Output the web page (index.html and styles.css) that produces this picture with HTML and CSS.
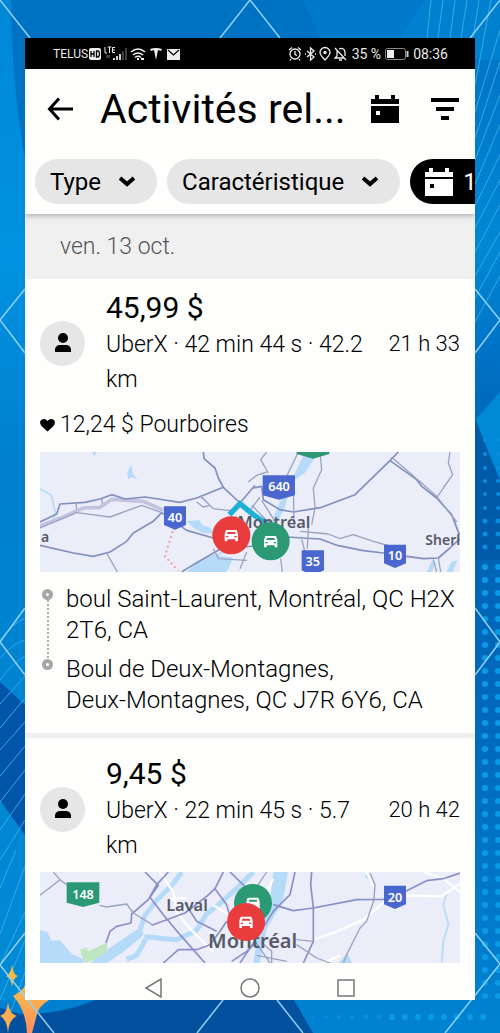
FILE: index.html
```html
<!DOCTYPE html>
<html lang="fr">
<head>
  <meta charset="UTF-8">
  <meta name="viewport" content="width=device-width, initial-scale=1.0">
  <title>Activités relatives aux revenus</title>
  <link rel="stylesheet" href="styles.css">
</head>
<body>
  <svg class="backdrop" viewBox="0 0 500 1033" preserveAspectRatio="none" aria-hidden="true">
    <defs>
      <linearGradient id="leftBlue" x1="0" y1="0" x2="0" y2="1">
        <stop offset="0" stop-color="#0087d8"/>
        <stop offset="0.25" stop-color="#0092e0"/>
        <stop offset="0.45" stop-color="#0080cf"/>
        <stop offset="1" stop-color="#008bd6"/>
      </linearGradient>
      <linearGradient id="rightBlue" x1="0" y1="0" x2="0" y2="1">
        <stop offset="0" stop-color="#0070c4"/>
        <stop offset="0.24" stop-color="#0088d4"/>
        <stop offset="0.34" stop-color="#0072c6"/>
        <stop offset="0.45" stop-color="#0062b2"/>
        <stop offset="0.7" stop-color="#0069bb"/>
        <stop offset="1" stop-color="#0083d2"/>
      </linearGradient>
      <linearGradient id="starFill" x1="0" y1="0" x2="0" y2="1">
        <stop offset="0" stop-color="#f9bd4d"/>
        <stop offset="1" stop-color="#ff8f5c"/>
      </linearGradient>
      <pattern id="dots" x="478" y="1" width="13" height="13" patternUnits="userSpaceOnUse">
        <circle cx="7" cy="7" r="3" fill="#0a9ae6"/>
      </pattern>
      <pattern id="dotsBottom" x="385" y="1010" width="13" height="13" patternUnits="userSpaceOnUse">
        <circle cx="7" cy="7" r="3" fill="#0a9ae6"/>
      </pattern>
    </defs>
    <rect width="250" height="1033" fill="url(#leftBlue)"/>
    <rect x="250" width="250" height="1033" fill="url(#rightBlue)"/>
    <path d="M11 0H500V38H26V165Q12 90 11 0Z" fill="#0072c4"/>
    <path d="M303 0H500V38H320Z" fill="#0079ca"/>
    <path d="M400 38L425 0H500V60H470Z" fill="#0081cf"/>
    <path d="M475 420L500 392V480Z" fill="#0089d6"/>
    <path d="M475 418L500 482V560H475Z" fill="#005aa8"/>
    <path d="M0 682L25 705V835L0 800Z" fill="#0055a8"/>
    <path d="M0 1000H294L313 1033H0Z" fill="#03509f"/>
    <path d="M0 1000H95Q60 1015 20 1014L0 1008Z" fill="#0080cf"/>
    <g class="thin">
      <path d="M431 0L427 38M443 0L438 38M455 0L450 38M467 0L461 38M479 0L473 38M491 0L475 85M500 30L475 112M500 62L475 138M500 95L475 160M500 125L475 184M500 155L475 206M500 180L475 228M500 205L475 252M500 232L475 276M500 252L475 298M500 276L475 322"/>
      <path d="M0 640Q12 624 25 618M0 658Q12 644 25 640M0 680Q12 664 25 656M0 704L25 676M0 728L25 698M0 750L25 722M0 776L25 746M0 802L25 770M0 830L25 794M0 860L25 820M0 888L16 850M0 934L25 866M0 965L25 912M0 1000L25 940M8 1020L25 972"/>
    </g>
    <rect x="478" y="560" width="22" height="440" fill="url(#dots)"/>
    <rect x="385" y="1010" width="104" height="13" fill="url(#dotsBottom)"/>
    <g fill="#0a8edd">
      <circle cx="485" cy="440" r="2"/><circle cx="498" cy="440" r="2"/>
      <circle cx="485" cy="454" r="2"/><circle cx="498" cy="454" r="2"/>
      <circle cx="485" cy="468" r="2"/><circle cx="498" cy="468" r="2"/>
      <circle cx="485" cy="481" r="2"/><circle cx="498" cy="481" r="2"/>
      <circle cx="485" cy="494" r="2"/><circle cx="498" cy="494" r="2"/>
      <circle cx="485" cy="508" r="2"/><circle cx="498" cy="508" r="2"/>
      <circle cx="485" cy="521" r="2.5"/><circle cx="498" cy="521" r="2.5"/>
      <circle cx="485" cy="534" r="2.5"/><circle cx="498" cy="534" r="2.5"/>
      <circle cx="485" cy="547" r="2.5"/><circle cx="498" cy="547" r="2.5"/>
      <circle cx="313" cy="1017" r="1"/><circle cx="326" cy="1017" r="1.5"/>
      <circle cx="339" cy="1017" r="2"/><circle cx="352" cy="1017" r="2"/>
      <circle cx="366" cy="1017" r="2.5"/><circle cx="379" cy="1017" r="2.5"/>
    </g>
    <path d="M13 996Q24 990 25 985H40V1000H49Q38 1006 36 1018L32 1033H27Q26 1010 13 996Z" fill="url(#starFill)"/>
    <path d="M12 964Q13 975 18 976Q13 978 12 987Q11 978 6 976Q11 974 12 964Z" fill="#f9b942"/>
    <path d="M8 1002Q9 1014 17 1016Q9 1019 8 1033Q7 1019 0 1016Q7 1014 8 1002Z" fill="#fdac4e"/>
    <path class="zigzag" d="M0 0L30 38M250 0L220 38M250 0L280 38M500 0L470 38M25 289L0 320L25 353M475 289L500 320L475 353M25 608L0 642L25 675M475 608L500 642L475 675M25 933L0 965L54 1033M475 933L500 964L445 1033M277 1000L303 1033M223 1000L197 1033"/>
  </svg>

  <div class="phone">
    <div class="status-bar">
      <div class="status-left">
        <span class="carrier">TELUS</span>
        <svg width="78" height="16" viewBox="0 0 78 16" aria-hidden="true">
          <rect x="1" y="2" width="12" height="12" rx="2" fill="#eee"/>
          <path d="M3 5v6M6 5v6M3 8h3M8.500 5v6h1q2 0 2-3t-2-3z" fill="none" stroke="#000" stroke-width="1.300"/>
          <path d="M17 1v6h2M19.500 1h4M21.500 1v6M27 1.500h-2.500v5H27M24.500 4H27" fill="none" stroke="#eee"/>
          <path d="M26 14v-2M29 14v-4M32 14V8" stroke="#eee" stroke-width="1.800"/>
          <path d="M35 14V5M38 14V2M19 9v3M21 9v3" stroke="#555" stroke-width="1.500"/>
          <path d="M43 6q7-6 14 0M45 9q5-4 10 0M47 11.500q3-2.500 6 0" fill="none" stroke="#eee" stroke-width="1.600"/>
          <path d="M49 13h2M53 13h3" stroke="#eee" stroke-width="2"/>
          <path d="M62 3q6-2 12 0l-1 2-3-1-2 10-2-10-3 1z" fill="#eee"/>
        </svg>
        <svg width="14" height="16" viewBox="0 0 14 16" aria-hidden="true">
          <rect y="3" width="13" height="11" fill="#eee"/>
          <path d="M1 4l5.500 5L12 4" fill="none" stroke="#000" stroke-width="1.200"/>
        </svg>
      </div>
      <div class="status-right">
        <svg width="60" height="16" viewBox="0 0 60 16" fill="none" stroke="#eee" stroke-width="1.300" aria-hidden="true">
          <circle cx="7" cy="8" r="5"/>
          <path d="M7 5v3.500l2 1M1 4l3-2.500M13 4l-3-2.500M3 13l-1 1.500M11 13l1 1.500"/>
          <path d="M19 5l7 6-3.500 3V2L26 5l-7 6M17 8h1M27 8h1"/>
          <path d="M37 14Q32 9 32 6.500a5 5 0 0 1 10 0Q42 9 37 14z"/>
          <circle cx="37" cy="6.500" r="1" fill="#eee"/>
          <path d="M47 2l11 12M49 5v5l-2 2h9M51 3q5-2 6 3v4M51 14h3"/>
        </svg>
        <span>35 %</span>
        <svg width="24" height="12" viewBox="0 0 24 12" aria-hidden="true">
          <rect x="0.500" y="0.500" width="20" height="11" rx="2" fill="none" stroke="#888"/>
          <rect x="2" y="2" width="7" height="8" fill="#eee"/>
          <path d="M22.500 3v6" stroke="#ccc" stroke-width="2"/>
        </svg>
        <span>08:36</span>
      </div>
    </div>

    <header class="header">
      <div class="title-row">
        <button class="icon-button" type="button" aria-label="Retour">
          <svg width="26" height="24" viewBox="0 0 26 24" fill="none" stroke="#000" stroke-width="3">
            <path d="M2 12H26M12 1.500L2.500 12L12 22.500"/>
          </svg>
        </button>
        <h1>Activités rel...</h1>
        <button class="icon-button" type="button" aria-label="Calendrier">
          <svg width="28" height="28" viewBox="0 0 28 28">
            <path d="M0 4H4V0H8V4H20V0H24V4H28V9H0ZM0 11H28V28H0ZM5 16V20H9V16Z" fill="#000" fill-rule="evenodd"/>
          </svg>
        </button>
        <button class="icon-button" type="button" aria-label="Filtrer">
          <svg width="28" height="22" viewBox="0 0 28 22" fill="#000">
            <path d="M0 0H28V4H0ZM5 9H23V13H5ZM10 18H18V22H10Z"/>
          </svg>
        </button>
      </div>
      <div class="chips">
        <button class="chip" type="button">Type
          <svg width="16" height="11" viewBox="0 0 16 11"><path d="M1 2L8 8L15 2" fill="none" stroke="#000" stroke-width="4"/></svg>
        </button>
        <button class="chip" type="button">Caractéristique
          <svg width="16" height="11" viewBox="0 0 16 11"><path d="M1 2L8 8L15 2" fill="none" stroke="#000" stroke-width="4"/></svg>
        </button>
        <button class="chip chip-dark" type="button">
          <svg width="28" height="28" viewBox="0 0 28 28">
            <path d="M0 4H4V0H8V4H20V0H24V4H28V9H0ZM0 11H28V28H0ZM5 16V20H9V16Z" fill="#fff" fill-rule="evenodd"/>
          </svg>
          1
        </button>
      </div>
    </header>

    <main class="activity">
      <h2 class="day">ven. 13 oct.</h2>

      <section class="trip">
        <div class="trip-head">
          <span class="avatar">
            <svg width="16" height="20" viewBox="0 0 16 20"><circle cx="8" cy="5" r="5"/><path d="M0 19V16Q1 12 5 12H11Q15 12 16 16V19Z"/></svg>
          </span>
          <div class="trip-info">
            <h3>45,99 $</h3>
            <p>UberX · 42 min 44 s · 42.2<br>km</p>
          </div>
          <time class="trip-time">21 h 33</time>
        </div>
        <p class="tip">
          <svg width="15" height="14" viewBox="0 0 15 14"><path d="M7.500 13.500L1.500 8Q0 6 0 4Q1 1 4 1Q6 1 7.500 3Q9 1 11 1Q14 1 15 4Q15 6 13.500 8Z"/></svg>
          12,24 $ Pourboires
        </p>

        <svg class="map" viewBox="0 0 1260 360" preserveAspectRatio="xMidYMid slice" role="img" aria-label="Carte du trajet">
          <g class="water-fill">
            <path d="M262 60l12-22 4 25 14 20-18-8-10 8zM155 0h16l-8 12zM440 208l38-4 10 16 20 6 20 20-40-4-24-12zM440 360l30-32 50-20 60 10-20 42zM1160 360l16-34 10 8-10 26zM1220 360l14-30 18-6-14 36z"/>
            <path d="M795 0h40L795 62 755 90 735 165 705 225 690 220 720 150 762 70z"/>
          </g>
          <g class="water-line">
            <path d="M0 110L34 130L46 182L40 200M470 345L510 318L570 290"/>
          </g>
          <path d="M0 222L70 195L130 168L180 166L215 142L310 148L370 175" class="border-band"/>
          <g class="road">
            <path d="M0 210L50 186L60 156L135 151L180 141L215 128L255 141L315 135L420 151L470 138L550 106L600 153L645 100"/>
            <path d="M490 0L492 20L525 48L535 78L550 106"/>
            <path d="M0 280L100 303L160 313L210 300L260 268L280 243L340 208L365 182L440 235L520 258"/>
            <path d="M640 108L665 103L670 143L720 173L760 180L845 166L945 128L1050 26L1075 0"/>
            <path d="M1050 26L1130 83L1145 103L1190 138L1235 188L1258 248"/>
            <path d="M740 255L840 261L895 281L970 296L1030 303L1100 313L1150 320L1195 318L1230 288L1260 260"/>
            <path d="M425 360L460 338L540 292L660 280"/>
          </g>
          <g class="road minor">
            <path d="M0 228L110 182L210 195L305 160L365 182M108 154L110 172M185 140L187 155M200 303L232 360"/>
            <path d="M480 132L510 160L490 165L470 150M482 132L520 170L570 176M680 0L662 23L685 63M775 0L740 73M840 0L845 53L820 108L825 168L815 218M760 88L762 228"/>
            <path d="M1055 16L1110 63L1190 133L1250 210M1230 0L1225 33L1238 68L1210 108L1190 138"/>
            <path d="M780 238L865 246L900 260L940 248L1000 268L1060 285M785 262L795 300M805 228L802 290M722 320L727 360M1195 318L1202 360M1180 322L1190 360"/>
            <path d="M625 90L650 70L680 60M635 160L690 215M660 135L630 175M520 290L535 320L620 325M600 350L620 300M665 145L700 200"/>
          </g>
          <path d="M398 238L375 313L415 356" class="trail"/>
          <path d="M568 188L600 155L640 188L680 215" class="route"/>
          <g class="badge-blue">
            <path d="M668 70H765V130L717 143L668 130ZM372 163H438V219L405 233L372 219ZM785 295H852V355L818 370L785 355ZM1032 278H1098V334L1065 348L1032 334Z"/>
          </g>
          <path d="M770 -40H868V6L819 20L770 6Z" class="badge-green"/>
          <g class="badge-text">
            <text x="717" y="117">640</text>
            <text x="405" y="211">40</text>
            <text x="818" y="342">35</text>
            <text x="1065" y="325">10</text>
          </g>
          <g class="place">
            <text x="702" y="228" text-anchor="middle" class="town">Montréal</text>
            <text x="3" y="270">a</text>
            <text x="1156" y="280">Sherl</text>
          </g>
          <circle cx="574" cy="250" r="57" fill="#e93c3c"/>
          <path d="M554 246l4-12h32l4 12v22h-8v-6h-24v6h-8zM558 252v4h7v-4zM583 252v4h7v-4zM563 240l-2 6h26l-2-6z" fill="#fff" fill-rule="evenodd"/>
          <circle cx="692" cy="268" r="57" fill="#2b9974"/>
          <path d="M672 264l4-12h32l4 12v22h-8v-6h-24v6h-8zM676 270v4h7v-4zM701 270v4h7v-4zM681 258l-2 6h26l-2-6z" fill="#fff" fill-rule="evenodd"/>
        </svg>

        <ol class="stops">
          <li>boul Saint-Laurent, Montréal, QC H2X<br>2T6, CA</li>
          <li>Boul de Deux-Montagnes,<br>Deux-Montagnes, QC J7R 6Y6, CA</li>
        </ol>
      </section>

      <section class="trip">
        <div class="trip-head">
          <span class="avatar">
            <svg width="16" height="20" viewBox="0 0 16 20"><circle cx="8" cy="5" r="5"/><path d="M0 19V16Q1 12 5 12H11Q15 12 16 16V19Z"/></svg>
          </span>
          <div class="trip-info">
            <h3>9,45 $</h3>
            <p>UberX · 22 min 45 s · 5.7<br>km</p>
          </div>
          <time class="trip-time">20 h 42</time>
        </div>

        <svg class="map map-cut" viewBox="0 0 1260 273" preserveAspectRatio="xMidYMid slice" role="img" aria-label="Carte du trajet">
          <g class="water-fill">
            <path d="M0 174L22 180L34 206L60 205L95 245L130 262V273H0ZM150 273L200 235L265 190L305 165L310 190L250 240L200 273ZM700 0H744L728 90L680 170L660 273H640L655 180L690 90ZM895 273L922 243L936 273ZM980 0l12 30-16-16z"/>
          </g>
          <g class="water-line wide">
            <path d="M300 175L315 130L350 85L400 35L425 0M260 262L290 250L310 215L320 195L410 203L470 175L500 125L540 95L600 40L640 0"/>
          </g>
          <path d="M1220 65L1210 98L1225 158L1210 208L1205 273" class="water-line"/>
          <path d="M120 233L140 226L145 238L200 212L203 238L165 262L135 273L128 260Z" fill="#bfe6c1"/>
          <g class="road-white">
            <path d="M360 0L400 60L410 120L450 170L520 240M390 80L440 78M520 100L570 130M700 20L660 100M820 203L880 183L970 143L1040 85L1100 70L1205 73L1260 35M980 0L1000 45M900 250L850 273M1150 0L1210 20L1260 60"/>
          </g>
          <g class="road purple">
            <path d="M198 213L210 178L230 163L273 153L275 126L325 83L350 38L385 0M315 0L355 40L330 76L370 128L420 188L495 273"/>
            <path d="M335 160L435 123L500 73L525 50L550 0M525 50L560 98L575 150M435 93L470 148L530 178M370 273L415 233L470 233L510 218L540 178L560 148M570 0L630 58M575 268L620 238L650 210"/>
            <path d="M815 0L812 38L820 108L820 208L790 273M765 0L750 68L700 118L675 158L650 198L600 273"/>
            <path d="M700 98L760 116L820 108L950 83L1030 82L1100 56L1160 26L1210 20L1260 3"/>
          </g>
          <g class="road minor">
            <path d="M0 70L60 23L40 0M60 23L80 38M178 100L200 105L260 96L280 123L340 160M990 3L1005 38L1002 83L980 148L960 168L920 248L910 273"/>
            <path d="M770 203L820 208M770 218L830 258L870 273M640 200L690 273M665 212L695 238V273M680 0L640 60M650 250L740 268"/>
          </g>
          <path d="M80 31H178V92L129 105L80 92Z" class="badge-green"/>
          <path d="M1032 41H1098V97L1065 111L1032 97Z" class="badge-blue"/>
          <g class="badge-text">
            <text x="129" y="80">148</text>
            <text x="1065" y="90">20</text>
          </g>
          <g class="place">
            <text x="441" y="116" text-anchor="middle" class="town">Laval</text>
            <text x="638" y="228" text-anchor="middle" class="city">Montréal</text>
          </g>
          <circle cx="639" cy="93" r="57" fill="#2b9974"/>
          <path d="M619 89l4-12h32l4 12v22h-8v-6h-24v6h-8zM628 83l-2 6h26l-2-6z" fill="#fff" fill-rule="evenodd"/>
          <circle cx="618" cy="150" r="57" fill="#e93c3c"/>
          <path d="M598 146l4-12h32l4 12v22h-8v-6h-24v6h-8zM602 152v4h7v-4zM627 152v4h7v-4zM607 140l-2 6h26l-2-6z" fill="#fff" fill-rule="evenodd"/>
        </svg>
      </section>
    </main>

    <nav class="nav-bar">
      <button type="button" aria-label="Précédent">
        <svg width="20" height="20" viewBox="0 0 20 20"><path d="M2 10L17 1V19Z"/></svg>
      </button>
      <button type="button" aria-label="Accueil">
        <svg width="20" height="20" viewBox="0 0 20 20"><circle cx="10" cy="10" r="9"/></svg>
      </button>
      <button type="button" aria-label="Applications récentes">
        <svg width="20" height="20" viewBox="0 0 20 20"><rect x="2" y="2" width="16" height="16"/></svg>
      </button>
    </nav>
  </div>
</body>
</html>
```

FILE: styles.css
```css
*,
*::before,
*::after {
  box-sizing: border-box;
}

body {
  margin: 0;
  padding: 38px 25px 33px;
  position: relative;
  min-height: 100vh;
  background-color: #0080cf;
  font-family: Roboto, "Liberation Sans", sans-serif;
  font-size: 23px;
  font-weight: 300;
  color: #000;
}

h1, h2, h3, p, ol {
  margin: 0;
  padding: 0;
}

button {
  border: none;
  padding: 0;
  background: none;
  font-family: inherit;
  color: #000;
  cursor: pointer;
}

svg {
  display: block;
  flex: none;
}

.backdrop {
  position: absolute;
  top: 0;
  left: 0;
  width: 100%;
  height: 100%;
}

.backdrop .thin {
  fill: none;
  stroke: #35aae6;
  stroke-width: 1;
}

.backdrop .zigzag {
  fill: none;
  stroke: #8fd0f5;
  stroke-width: 1.5;
}

.phone {
  position: relative;
  display: flex;
  flex-direction: column;
  background-color: #fefefd;
  overflow: hidden;
}

/* status bar */
.status-bar {
  display: flex;
  justify-content: space-between;
  align-items: center;
  height: 31px;
  padding: 0 27px 0 28px;
  background-color: #000;
  color: #e8e8e8;
  font-size: 14px;
  font-weight: 400;
}

.status-left,
.status-right {
  display: flex;
  align-items: center;
}

.status-left svg + svg {
  margin-left: 1px;
}

.status-right {
  gap: 4px;
}

.carrier {
  font-size: 12px;
}

/* header */
.header {
  position: relative;
  height: 145px;
  background-color: #fefefd;
  box-shadow: 0 2px 5px rgba(0, 0, 0, 0.25);
}

.title-row {
  display: flex;
  align-items: center;
  height: 80px;
  padding: 0 16px 0 22px;
}

h1 {
  flex: 1;
  margin-left: 27px;
  font-size: 41px;
  font-weight: 400;
  white-space: nowrap;
}

.icon-button + .icon-button {
  margin-left: 32px;
}

.chips {
  display: flex;
  gap: 10px;
  margin-top: 10px;
  padding-left: 10px;
  overflow: hidden;
}

.chip {
  display: flex;
  flex: none;
  align-items: center;
  gap: 18px;
  height: 45px;
  padding: 0 22px 0 15px;
  border-radius: 23px;
  background-color: #e6e6e6;
  font-size: 24px;
}

.chip-dark {
  gap: 10px;
  background-color: #000;
  color: #fff;
}

/* activity list */
.day {
  height: 65px;
  padding-left: 35px;
  background-color: #f0f0f0;
  color: #555;
  font-size: 23px;
  font-weight: 300;
  line-height: 65px;
}

.trip {
  padding: 10px 15px 0;
}

.trip + .trip {
  margin-top: 17px;
  padding-top: 17px;
  border-top: 5px solid #f0f0f0;
}

.trip-head {
  display: flex;
  align-items: center;
}

.avatar {
  display: flex;
  flex: none;
  align-items: center;
  justify-content: center;
  width: 45px;
  height: 45px;
  border-radius: 50%;
  background-color: #e6e6e6;
}

.trip-info {
  flex: 1;
  margin-left: 21px;
}

.trip-info h3 {
  font-size: 30px;
  font-weight: 400;
  line-height: 38px;
}

.trip-info p {
  line-height: 35px;
}

.trip-time {
  font-size: 22px;
  white-space: nowrap;
}

.tip {
  display: flex;
  align-items: center;
  gap: 5px;
  margin-top: 13px;
  line-height: 30px;
}

.map {
  width: 100%;
  height: 120px;
  margin-top: 12px;
  background-color: #ebedf8;
}

.map-cut {
  height: 91px;
  margin-top: 9px;
}

.map text {
  font-family: "Noto Sans", sans-serif;
  font-weight: 600;
}

.water-fill {
  fill: #b5dbf8;
}

.water-line {
  fill: none;
  stroke: #b5dbf8;
  stroke-width: 5;
}

.water-line.wide {
  stroke-width: 15;
}

.border-band {
  fill: none;
  stroke: #c3c3df;
  stroke-width: 11;
}

.road {
  fill: none;
  stroke: #8290be;
  stroke-width: 5;
  stroke-linejoin: round;
}

.road.purple {
  stroke: #8a8fca;
}

.road.minor {
  stroke: #9aa3c2;
  stroke-width: 4;
}

.road-white {
  fill: none;
  stroke: #fff;
  stroke-width: 7;
}

.trail {
  fill: none;
  stroke: #f0a0a0;
  stroke-width: 6;
  stroke-dasharray: 6 9;
}

.route {
  fill: none;
  stroke: #1fb0d8;
  stroke-width: 16;
}

.badge-blue {
  fill: #4a67d0;
}

.badge-green {
  fill: #2b9974;
}

.badge-text {
  fill: #fff;
  font-size: 38px;
  text-anchor: middle;
}

.place {
  fill: #555b68;
  font-size: 42px;
}

.place .town {
  font-size: 49px;
}

.place .city {
  font-size: 60px;
}

.stops {
  margin-top: 12px;
  list-style: none;
  font-size: 24px;
}

.stops li {
  position: relative;
  padding-left: 26px;
  line-height: 31px;
  white-space: nowrap;
}

.stops li + li {
  margin-top: 8px;
}

.stops li::before {
  content: "";
  position: absolute;
  top: 5px;
  left: 2px;
  width: 11px;
  height: 11px;
  border: 4px solid #a6a6a6;
  border-radius: 50%;
}

.stops li:first-child::after {
  content: "";
  position: absolute;
  top: 16px;
  bottom: -12px;
  left: 7px;
  border-left: 2px dotted #aaa;
}

/* system navigation */
.nav-bar {
  display: flex;
  justify-content: center;
  gap: 76px;
  padding: 15px 0 2px;
}

.nav-bar svg {
  fill: none;
  stroke: #777;
  stroke-width: 1.5;
}
```
